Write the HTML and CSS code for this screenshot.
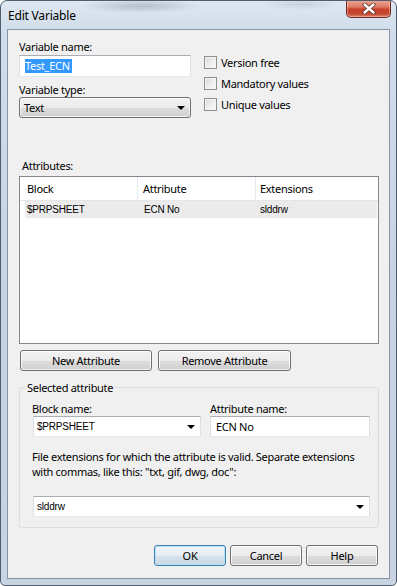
FILE: index.html
```html
<!DOCTYPE html>
<html>
<head>
<meta charset="utf-8">
<link rel="stylesheet" href="styles.css">
</head>
<body>
<div class="window">
  <div class="titlebar">
    <span class="title">Edit Variable</span>
    <div class="close-btn">
      <svg width="14" height="11" viewBox="0 0 14 11">
        <path d="M2.5 1.5 L11.5 9.5 M11.5 1.5 L2.5 9.5" stroke="#5a2a22" stroke-width="4" stroke-linecap="round"/>
        <path d="M2.5 1.5 L11.5 9.5 M11.5 1.5 L2.5 9.5" stroke="#ffffff" stroke-width="2.4" stroke-linecap="round"/>
      </svg>
    </div>
  </div>
  <div class="client">
    <div class="top-row">
      <div class="left-col">
        <div class="label">Variable name:</div>
        <div class="textbox"><span class="selected-text">Test_ECN</span></div>
        <div class="label gap-top">Variable type:</div>
        <div class="dropdown-list"><span>Text</span><span class="arrow"></span></div>
      </div>
      <div class="right-col">
        <div class="check-row"><span class="checkbox"></span><span>Version free</span></div>
        <div class="check-row"><span class="checkbox"></span><span>Mandatory values</span></div>
        <div class="check-row"><span class="checkbox"></span><span>Unique values</span></div>
      </div>
    </div>

    <div class="label attr-label">Attributes:</div>
    <div class="listview">
      <div class="lv-header">
        <div class="lv-h lv-h1">Block</div>
        <div class="lv-h lv-h2">Attribute</div>
        <div class="lv-h lv-h3">Extensions</div>
      </div>
      <div class="lv-row">
        <div class="lv-c lv-c1">$PRPSHEET</div>
        <div class="lv-c lv-c2">ECN No</div>
        <div class="lv-c lv-c3">slddrw</div>
      </div>
    </div>

    <div class="btn-row">
      <div class="btn btn-new">New Attribute</div>
      <div class="btn btn-remove">Remove Attribute</div>
    </div>

    <fieldset class="group">
      <legend class="group-title">Selected attribute</legend>
      <div class="group-body">
        <div class="name-row">
          <div class="name-col block-col">
            <div class="label">Block name:</div>
            <div class="combo block-combo"><span>$PRPSHEET</span><span class="arrow"></span></div>
          </div>
          <div class="name-col attr-col">
            <div class="label">Attribute name:</div>
            <div class="textbox plain">ECN No</div>
          </div>
        </div>
        <p class="hint">File extensions for which the attribute is valid. Separate extensions with commas, like this: "txt, gif, dwg, doc":</p>
        <div class="combo ext-combo"><span>slddrw</span><span class="arrow"></span></div>
      </div>
    </fieldset>

    <div class="footer">
      <div class="btn btn-small btn-default">OK</div>
      <div class="btn btn-small">Cancel</div>
      <div class="btn btn-small">Help</div>
    </div>
  </div>
</div>
</body>
</html>
```
FILE: styles.css
```css
html, body {
  margin: 0;
  padding: 0;
  background: #ffffff;
}
body {
  font-family: "Noto Sans", "Open Sans", sans-serif;
  font-size: 11px;
  letter-spacing: -0.3px;
  color: #000;
}
.window {
  box-sizing: border-box;
  width: 397px;
  height: 586px;
  border: 1px solid #4f5d6e;
  border-radius: 7px 7px 5px 5px;
  background:
    radial-gradient(ellipse 60px 7px at 140px 5px, rgba(110,120,140,0.35), rgba(110,120,140,0) 100%),
    radial-gradient(ellipse 40px 6px at 300px 3px, rgba(110,120,140,0.18), rgba(110,120,140,0) 100%),
    linear-gradient(180deg, #dde7f2 0px, #d1ddeb 30px, #c7d3e2 300px, #c9d4e2 586px);
  display: flex;
  flex-direction: column;
  overflow: hidden;
}
.titlebar {
  height: 28px;
  flex: none;
  display: flex;
  align-items: flex-start;
  justify-content: space-between;
  padding-left: 7px;
  padding-right: 5px;
}
.title {
  font-size: 12px;
  line-height: 14px;
  margin-top: 8px;
  color: #000;
  letter-spacing: -0.2px;
}
.close-btn {
  width: 45px;
  height: 18px;
  margin-top: -1px;
  box-sizing: border-box;
  border: 1px solid #6e2a20;
  border-top: none;
  border-radius: 0 0 5px 5px;
  background: linear-gradient(180deg, #eaa797 0%, #de7c67 40%, #c8412b 55%, #c4472f 80%, #d9806a 100%);
  box-shadow: inset 0 0 0 1px rgba(255,210,200,0.45);
  display: flex;
  align-items: center;
  justify-content: center;
}
.client {
  flex: 1;
  margin: 0 6px 6px 6px;
  border: 1px solid #8694a4;
  background: #f0f0f0;
  display: flex;
  flex-direction: column;
  padding: 9px 10px 0 11px;
}
.label {
  line-height: 15px;
  height: 15px;
  white-space: nowrap;
}
.gap-top {
  margin-top: 5px;
}
.top-row {
  display: flex;
}
.left-col {
  width: 172px;
  display: flex;
  flex-direction: column;
}
.right-col {
  margin-left: 13px;
  margin-top: 13px;
  display: flex;
  flex-direction: column;
}
.check-row {
  height: 21px;
  display: flex;
  align-items: center;
  gap: 4px;
  white-space: nowrap;
}
.checkbox {
  width: 13px;
  height: 13px;
  box-sizing: border-box;
  border: 1px solid #8f8f8f;
  background: linear-gradient(135deg, #d9d9d9 0%, #ededed 50%, #fcfcfc 100%);
  box-shadow: inset 0 0 0 1px #f4f4f4;
  flex: none;
}
.textbox {
  margin-top: 1px;
  height: 22px;
  box-sizing: border-box;
  border: 1px solid #abadb3;
  border-left-color: #dbdfe6;
  border-right-color: #dbdfe6;
  border-bottom-color: #e3e9ef;
  background: #fff;
  display: flex;
  align-items: center;
  padding-left: 5px;
  white-space: nowrap;
}
.selected-text {
  background: #3399ff;
  color: #fff;
  line-height: 14px;
  padding-right: 2px;
}
.dropdown-list {
  margin-top: 0;
  height: 21px;
  box-sizing: border-box;
  border: 1px solid #707070;
  border-radius: 3px;
  background: linear-gradient(180deg, #f2f2f2 0%, #ebebeb 50%, #dddddd 51%, #cfcfcf 100%);
  box-shadow: inset 0 0 0 1px rgba(255,255,255,0.7);
  display: flex;
  align-items: center;
  justify-content: space-between;
  padding: 0 5px 0 4px;
}
.arrow {
  width: 0;
  height: 0;
  border-left: 4px solid transparent;
  border-right: 4px solid transparent;
  border-top: 4px solid #000;
  margin-top: 1px;
}
.attr-label {
  margin-top: 40px;
  padding-left: 3px;
}
.listview {
  margin-top: 3px;
  height: 168px;
  box-sizing: border-box;
  border: 1px solid #828790;
  background: #fff;
  font-family: "Liberation Sans", Arial, sans-serif;
  font-size: 10px;
  letter-spacing: -0.2px;
}
.lv-header {
  display: grid;
  grid-template-columns: 118px 118px 1fr;
  height: 23px;
  border-bottom: 1px solid #e5e5e5;
  font-family: "Noto Sans", "Open Sans", sans-serif;
  font-size: 11px;
  letter-spacing: -0.3px;
}
.lv-h {
  display: flex;
  align-items: center;
  border-right: 1px solid #e3e8ee;
}
.lv-h1 { padding-left: 7px; }
.lv-h2 { padding-left: 5px; }
.lv-h3 { padding-left: 4px; border-right: none; }
.lv-row {
  display: grid;
  grid-template-columns: 113px 118px 1fr;
  height: 17px;
  margin: 0 1px 0 5px;
  background: #ebebeb;
}
.lv-c {
  display: flex;
  align-items: center;
  white-space: nowrap;
}
.lv-c1 { padding-left: 2px; }
.lv-c2 { padding-left: 6px; }
.lv-c3 { padding-left: 4px; }
.btn-row {
  display: flex;
  gap: 6px;
  margin-top: 6px;
  padding-left: 1px;
}
.btn {
  height: 21px;
  box-sizing: border-box;
  border: 1px solid #707070;
  border-radius: 3px;
  background: linear-gradient(180deg, #f2f2f2 0%, #ebebeb 50%, #dddddd 51%, #cfcfcf 100%);
  box-shadow: inset 0 0 0 1px rgba(255,255,255,0.75);
  display: flex;
  align-items: center;
  justify-content: center;
  white-space: nowrap;
}
.btn-new { width: 132px; }
.btn-remove { width: 133px; }
.group {
  margin: 9px 0 0 0;
  padding: 0 8px 10px 5px;
  border: 1px solid #d5dfe5;
  border-radius: 3px;
  min-width: 0;
}
.group-title {
  padding: 0 2px;
  line-height: 15px;
}
.group-body {
  padding-left: 7px;
  display: flex;
  flex-direction: column;
}
.name-row {
  display: flex;
  margin-top: 6px;
}
.block-col {
  width: 169px;
  display: flex;
  flex-direction: column;
}
.attr-col {
  margin-left: 9px;
  flex: 1;
  display: flex;
  flex-direction: column;
}
.attr-col .textbox {
  margin-top: 0;
  height: 21px;
}
.combo {
  height: 21px;
  box-sizing: border-box;
  border: 1px solid #abadb3;
  border-left-color: #dbdfe6;
  border-right-color: #dbdfe6;
  border-bottom-color: #e3e9ef;
  background: #fff;
  display: flex;
  align-items: center;
  justify-content: space-between;
  padding: 0 5px 0 3px;
  font-family: "Liberation Sans", Arial, sans-serif;
  font-size: 10px;
  letter-spacing: -0.2px;
}
.block-combo {
  margin-left: 1px;
}
.hint {
  margin: 12px 0 0 0;
  line-height: 15px;
}
.ext-combo {
  margin-top: 17px;
  margin-left: 1px;
}
.footer {
  display: flex;
  justify-content: flex-end;
  gap: 4px;
  margin-top: 17px;
  padding-right: 1px;
}
.btn-small { width: 72px; }
.btn-default {
  border-color: #3c7fb1;
  background: linear-gradient(180deg, #f0f5f9 0%, #e5edf3 50%, #d6e2eb 51%, #cbd9e4 100%);
  box-shadow: inset 0 0 0 1px rgba(180,225,250,0.9);
}
```
